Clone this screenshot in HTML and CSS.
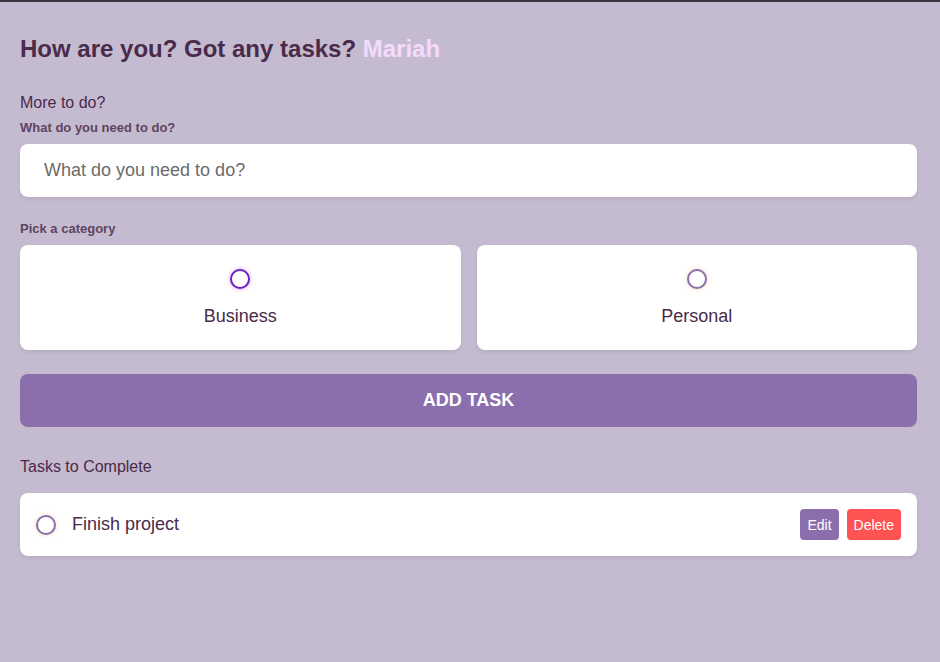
FILE: index.html
```html
<!DOCTYPE html>
<html>
<head>
<meta charset="utf-8">
<link rel="stylesheet" href="styles.css">
</head>
<body>
<main class="app">
  <h1 class="greeting">How are you? Got any tasks? <span class="name">Mariah</span></h1>
  <section class="create">
    <h3 class="section-title">More to do?</h3>
    <h4 class="field-label">What do you need to do?</h4>
    <div class="input">What do you need to do?</div>
    <h4 class="field-label cat-label">Pick a category</h4>
    <div class="options">
      <label class="option">
        <span class="bubble bubble-business"></span>
        <span class="option-text">Business</span>
      </label>
      <label class="option">
        <span class="bubble bubble-personal"></span>
        <span class="option-text">Personal</span>
      </label>
    </div>
    <button class="add-btn">ADD TASK</button>
  </section>
  <section class="list">
    <h3 class="section-title">Tasks to Complete</h3>
    <div class="todo-item">
      <span class="bubble bubble-personal small"></span>
      <span class="todo-text">Finish project</span>
      <div class="actions">
        <button class="btn edit">Edit</button>
        <button class="btn delete">Delete</button>
      </div>
    </div>
  </section>
</main>
</body>
</html>
```

FILE: styles.css
```css
html, body {
  margin: 0;
  padding: 0;
}
body {
  background: #c5bbd0;
  border-top: 2px solid #3b3640;
  font-family: "Liberation Sans", Arial, sans-serif;
  color: #4a2a4a;
  height: 660px;
  overflow: hidden;
}
.app {
  width: 897px;
  padding: 0 20px;
}
.greeting {
  margin: 33px 0 0;
  font-size: 24px;
  font-weight: 700;
  line-height: 28px;
  color: #4a2a4a;
}
.name {
  color: #f5dbfb;
}
.section-title {
  margin: 0;
  font-size: 16px;
  font-weight: 400;
  line-height: 20px;
}
.create .section-title {
  margin-top: 30px;
}
.field-label {
  margin: 7px 0 0;
  font-size: 13px;
  font-weight: 700;
  line-height: 16px;
  color: #5e4460;
}
.input {
  margin-top: 8px;
  height: 53px;
  box-sizing: border-box;
  background: #fff;
  border-radius: 8px;
  padding: 0 24px;
  display: flex;
  align-items: center;
  font-size: 18px;
  color: #6b6b6b;
  box-shadow: 0 2px 4px rgba(0,0,0,0.08);
}
.cat-label {
  margin-top: 24px;
}
.options {
  margin-top: 8px;
  display: grid;
  grid-template-columns: 1fr 1fr;
  gap: 16px;
}
.option {
  background: #fff;
  border-radius: 8px;
  height: 105px;
  display: flex;
  flex-direction: column;
  align-items: center;
  padding-top: 24px;
  box-sizing: border-box;
  box-shadow: 0 2px 4px rgba(0,0,0,0.08);
}
.bubble {
  display: block;
  width: 20px;
  height: 20px;
  box-sizing: border-box;
  border-radius: 50%;
  border: 2px solid #8b6fad;
  background: #fff;
}
.bubble-business {
  border-color: #6b20c2;
  box-shadow: 0 0 4px rgba(170, 60, 230, 0.5);
}
.bubble-personal {
  box-shadow: 0 0 4px rgba(230, 180, 110, 0.55);
}
.option-text {
  margin-top: 16px;
  font-size: 18px;
  line-height: 22px;
  color: #4a2a4a;
}
.add-btn {
  display: block;
  width: 100%;
  margin-top: 24px;
  height: 53px;
  border: none;
  border-radius: 8px;
  background: #8b6fad;
  color: #fff;
  font-family: "Liberation Sans", Arial, sans-serif;
  font-size: 18px;
  font-weight: 700;
  box-shadow: 0 0 1px 0 rgba(210, 170, 120, 0.8);
}
.list {
  margin-top: 30px;
}
.todo-item {
  margin-top: 16px;
  height: 63px;
  box-sizing: border-box;
  background: #fff;
  border-radius: 8px;
  display: flex;
  align-items: center;
  padding: 0 16px;
  box-shadow: 0 2px 4px rgba(0,0,0,0.08);
}
.todo-text {
  margin-left: 16px;
  font-size: 18px;
  color: #4a2a4a;
  flex: 1;
}
.actions {
  display: flex;
  gap: 8px;
}
.btn {
  height: 31px;
  border: none;
  border-radius: 4px;
  color: #fff;
  font-family: "Liberation Sans", Arial, sans-serif;
  font-size: 14px;
  padding: 0 7px;
}
.edit {
  background: #8b6fad;
}
.delete {
  background: #ff5252;
}
```
